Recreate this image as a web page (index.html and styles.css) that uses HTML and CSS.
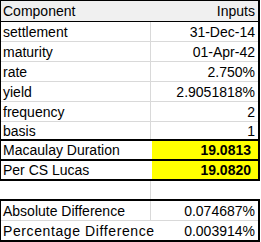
FILE: index.html
```html
<!DOCTYPE html>
<html>
<head>
<meta charset="utf-8">
<link rel="stylesheet" href="styles.css">
</head>
<body>
<div class="sheet">
  <div class="block top">
    <div class="row head"><div class="a">Component</div><div class="b">Inputs</div></div>
    <div class="row"><div class="a">settlement</div><div class="b">31-Dec-14</div></div>
    <div class="row"><div class="a">maturity</div><div class="b">01-Apr-42</div></div>
    <div class="row"><div class="a">rate</div><div class="b">2.750%</div></div>
    <div class="row"><div class="a">yield</div><div class="b">2.9051818%</div></div>
    <div class="row"><div class="a">frequency</div><div class="b">2</div></div>
    <div class="row last"><div class="a">basis</div><div class="b">1</div></div>
    <div class="row hl"><div class="a">Macaulay Duration</div><div class="b">19.0813</div></div>
    <div class="row hl"><div class="a">Per CS Lucas</div><div class="b">19.0820</div></div>
  </div>
  <div class="row blank"><div class="a"></div><div class="b"></div></div>
  <div class="block bottom">
    <div class="row"><div class="a">Absolute Difference</div><div class="b">0.074687%</div></div>
    <div class="row end"><div class="a wide">Percentage Difference</div><div class="b">0.003914%</div></div>
  </div>
</div>
</body>
</html>
```

FILE: styles.css
```css
html, body {
  margin: 0;
  padding: 0;
  background: #ffffff;
}
.sheet {
  width: 260px;
  font-family: "Liberation Sans", Arial, sans-serif;
  font-size: 14px;
  color: #000;
}
.block {
  border-left: 1px solid #000;
  border-right: 2px solid #000;
}
.block.top {
  border-top: 1px solid #000;
}
.block.bottom {
  border-top: 2px solid #000;
  border-bottom: 2px solid #000;
}
.row {
  display: flex;
  height: 19px;
  border-bottom: 1px solid #d9d9d9;
  line-height: 20px;
}
.row .a {
  width: 150px;
  padding-left: 2px;
  border-right: 1px solid #d9d9d9;
  white-space: nowrap;
  box-sizing: border-box;
  position: relative;
  z-index: 1;
}
.row .b {
  flex: 1;
  text-align: right;
  padding-right: 3px;
  white-space: nowrap;
}
.row.head {
  background: #f0f0f0;
  height: 20px;
  line-height: 20px;
  border-bottom: 1px solid #000;
}
.row.head .a {
  border-right-color: #f0f0f0;
}
.row.last {
  height: 17px;
  line-height: 18px;
  border-bottom: 2px solid #000;
}
.row.hl {
  height: 18px;
  line-height: 19px;
  border-bottom: 2px solid #000;
}
.row.hl .a {
  border-right: none;
  width: 151px;
}
.row.hl .b {
  background: #ffff00;
  font-weight: bold;
  padding-right: 7px;
}
.row.blank {
  height: 18px;
  border-bottom: none;
  margin-left: 1px;
  margin-right: 2px;
}
.row.end {
  border-bottom: none;
}
.row .a.wide {
  border-right: none;
  width: 151px;
  letter-spacing: 0.6px;
}
```
